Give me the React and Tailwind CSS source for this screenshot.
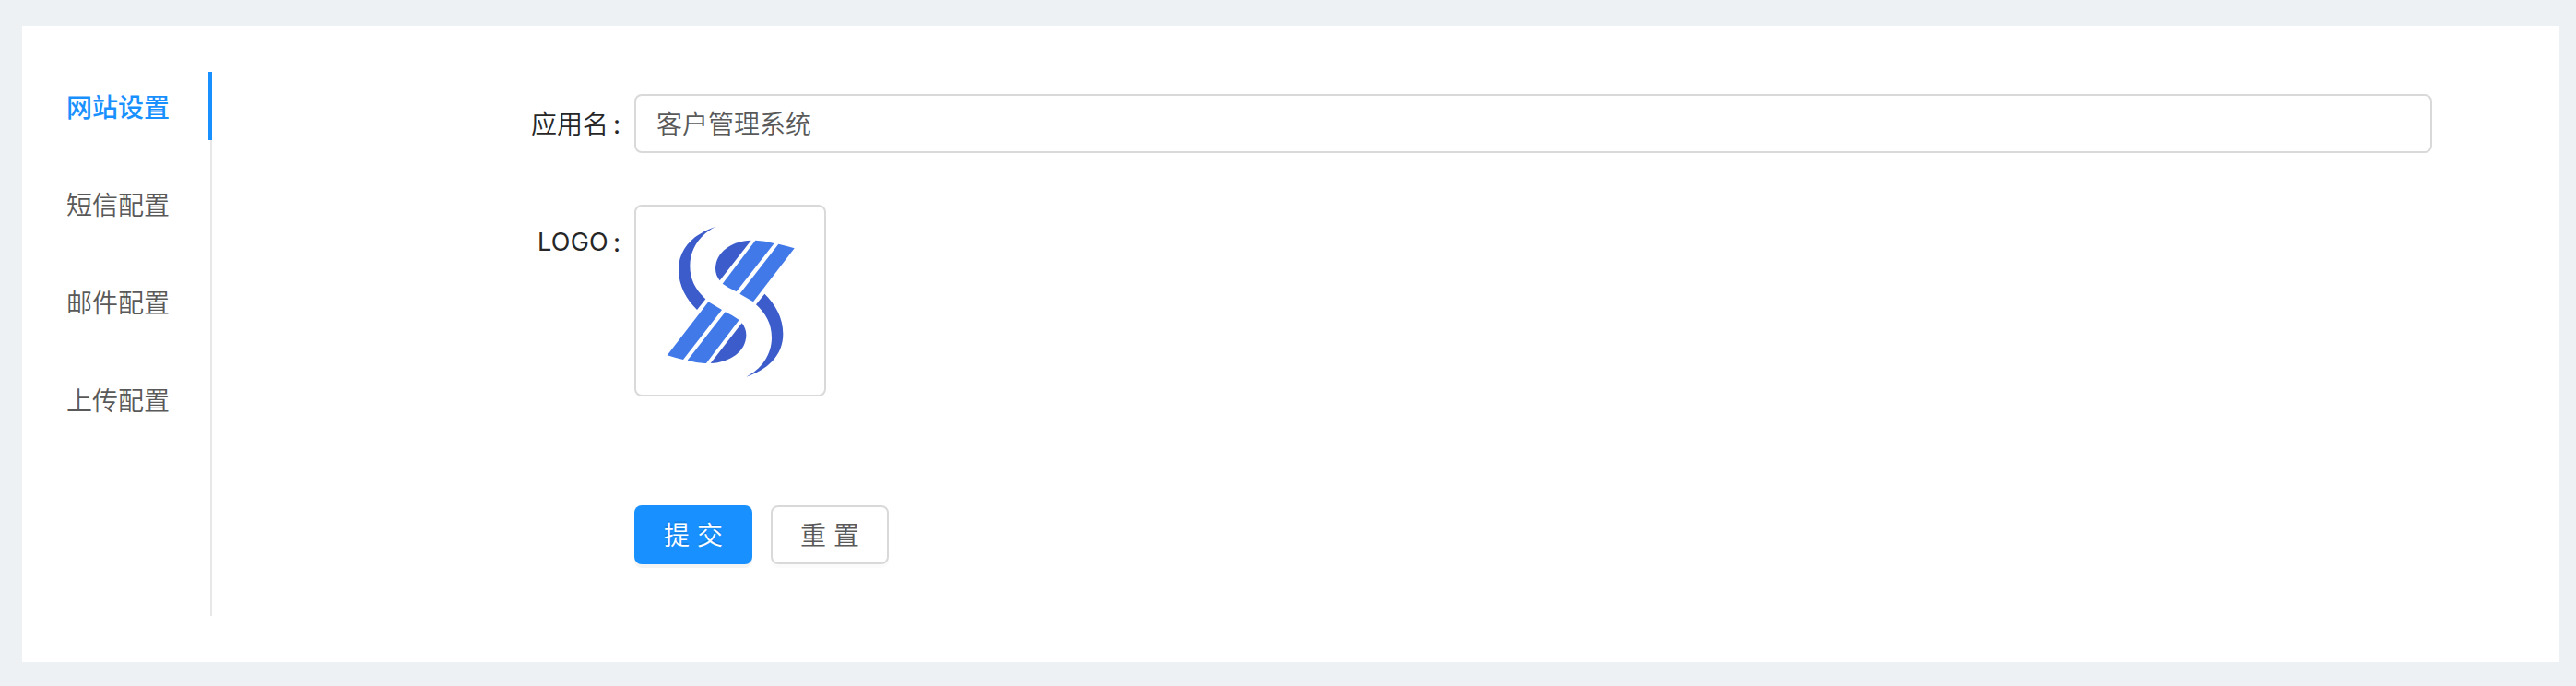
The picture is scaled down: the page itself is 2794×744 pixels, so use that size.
const tabs = ["网站设置", "短信配置", "邮件配置", "上传配置"];

function LogoHalf() {
  return (
    <>
      <path
        fill="#3b5cca"
        d="M288 93C222 114 168 160 168 232C168 286 194 330 228 363L256 328C226 300 205 268 205 220C205 164 240 116 288 93Z"
      />
      <path
        fill="#3b5cca"
        d="M404 137C340 139 288 176 288 229C288 244 293 256 302 268Z"
      />
      <path
        fill="#4279e9"
        d="M418 137Q450 138 479 147L356 304Q332 293 311 278Z"
      />
      <path fill="#4279e9" d="M493 149Q520 155 545 163L411 337L367 311Z" />
    </>
  );
}

function Logo() {
  return (
    <svg className="size-[204px]" viewBox="30 27 612 612" aria-hidden="true">
      <LogoHalf />
      <g transform="rotate(180 338 337)">
        <LogoHalf />
      </g>
    </svg>
  );
}

function Label({ children }) {
  return (
    <div className="flex h-16 w-[384px] shrink-0 items-center justify-end pt-px pr-[15px] text-[#262626]">
      <span>{children}</span>
      <span className="ml-[5px] w-2 text-center font-normal">:</span>
    </div>
  );
}

export default function App() {
  return (
    <div className="h-[744px] w-[2794px] bg-[#edf1f4] pt-7 pl-6 font-['Inter','Noto_Sans_CJK_SC',sans-serif] text-[28px] leading-[42px] font-[350] text-[#595959]">
      <main className="flex h-[690px] w-[2752px] bg-white py-[50px]">
        <nav className="flex w-[206px] flex-col gap-8 border-r-2 border-[#e8e8e8]">
          {tabs.map((tab, i) => (
            <a
              key={tab}
              className={
                i === 0
                  ? "-mr-[2px] flex h-[74px] items-center border-r-4 border-[#1890ff] pt-1 pl-12 font-medium text-[#1890ff]"
                  : "flex h-[74px] items-center pt-1 pl-12"
              }
            >
              {tab}
            </a>
          ))}
        </nav>
        <form className="flex flex-col pt-6 pl-[74px]" onSubmit={(e) => e.preventDefault()}>
          <div className="flex">
            <Label>应用名</Label>
            <input
              className="h-16 w-[1950px] rounded-lg border-2 border-[#d9d9d9] px-[22px] pb-[2px] outline-none"
              defaultValue="客户管理系统"
            />
          </div>
          <div className="mt-14 flex">
            <div className="pt-2">
              <Label>
                <span className="text-[27px] font-normal tracking-[0.01em]">LOGO</span>
              </Label>
            </div>
            <div className="size-[208px] rounded-lg border-2 border-[#d9d9d9]">
              <Logo />
            </div>
          </div>
          <div className="mt-[118px] flex gap-5 pl-[384px]">
            <button
              type="submit"
              className="h-16 w-32 rounded-lg bg-[#1890ff] pt-[2px] text-white shadow-[0_4px_0_rgba(0,0,0,0.045)] [text-shadow:0_-2px_0_rgba(0,0,0,0.12)]"
            >
              提 交
            </button>
            <button
              type="reset"
              className="h-16 w-32 rounded-lg border-2 border-[#d9d9d9] bg-white pt-[2px] shadow-[0_4px_0_rgba(0,0,0,0.015)]"
            >
              重 置
            </button>
          </div>
        </form>
      </main>
    </div>
  );
}
